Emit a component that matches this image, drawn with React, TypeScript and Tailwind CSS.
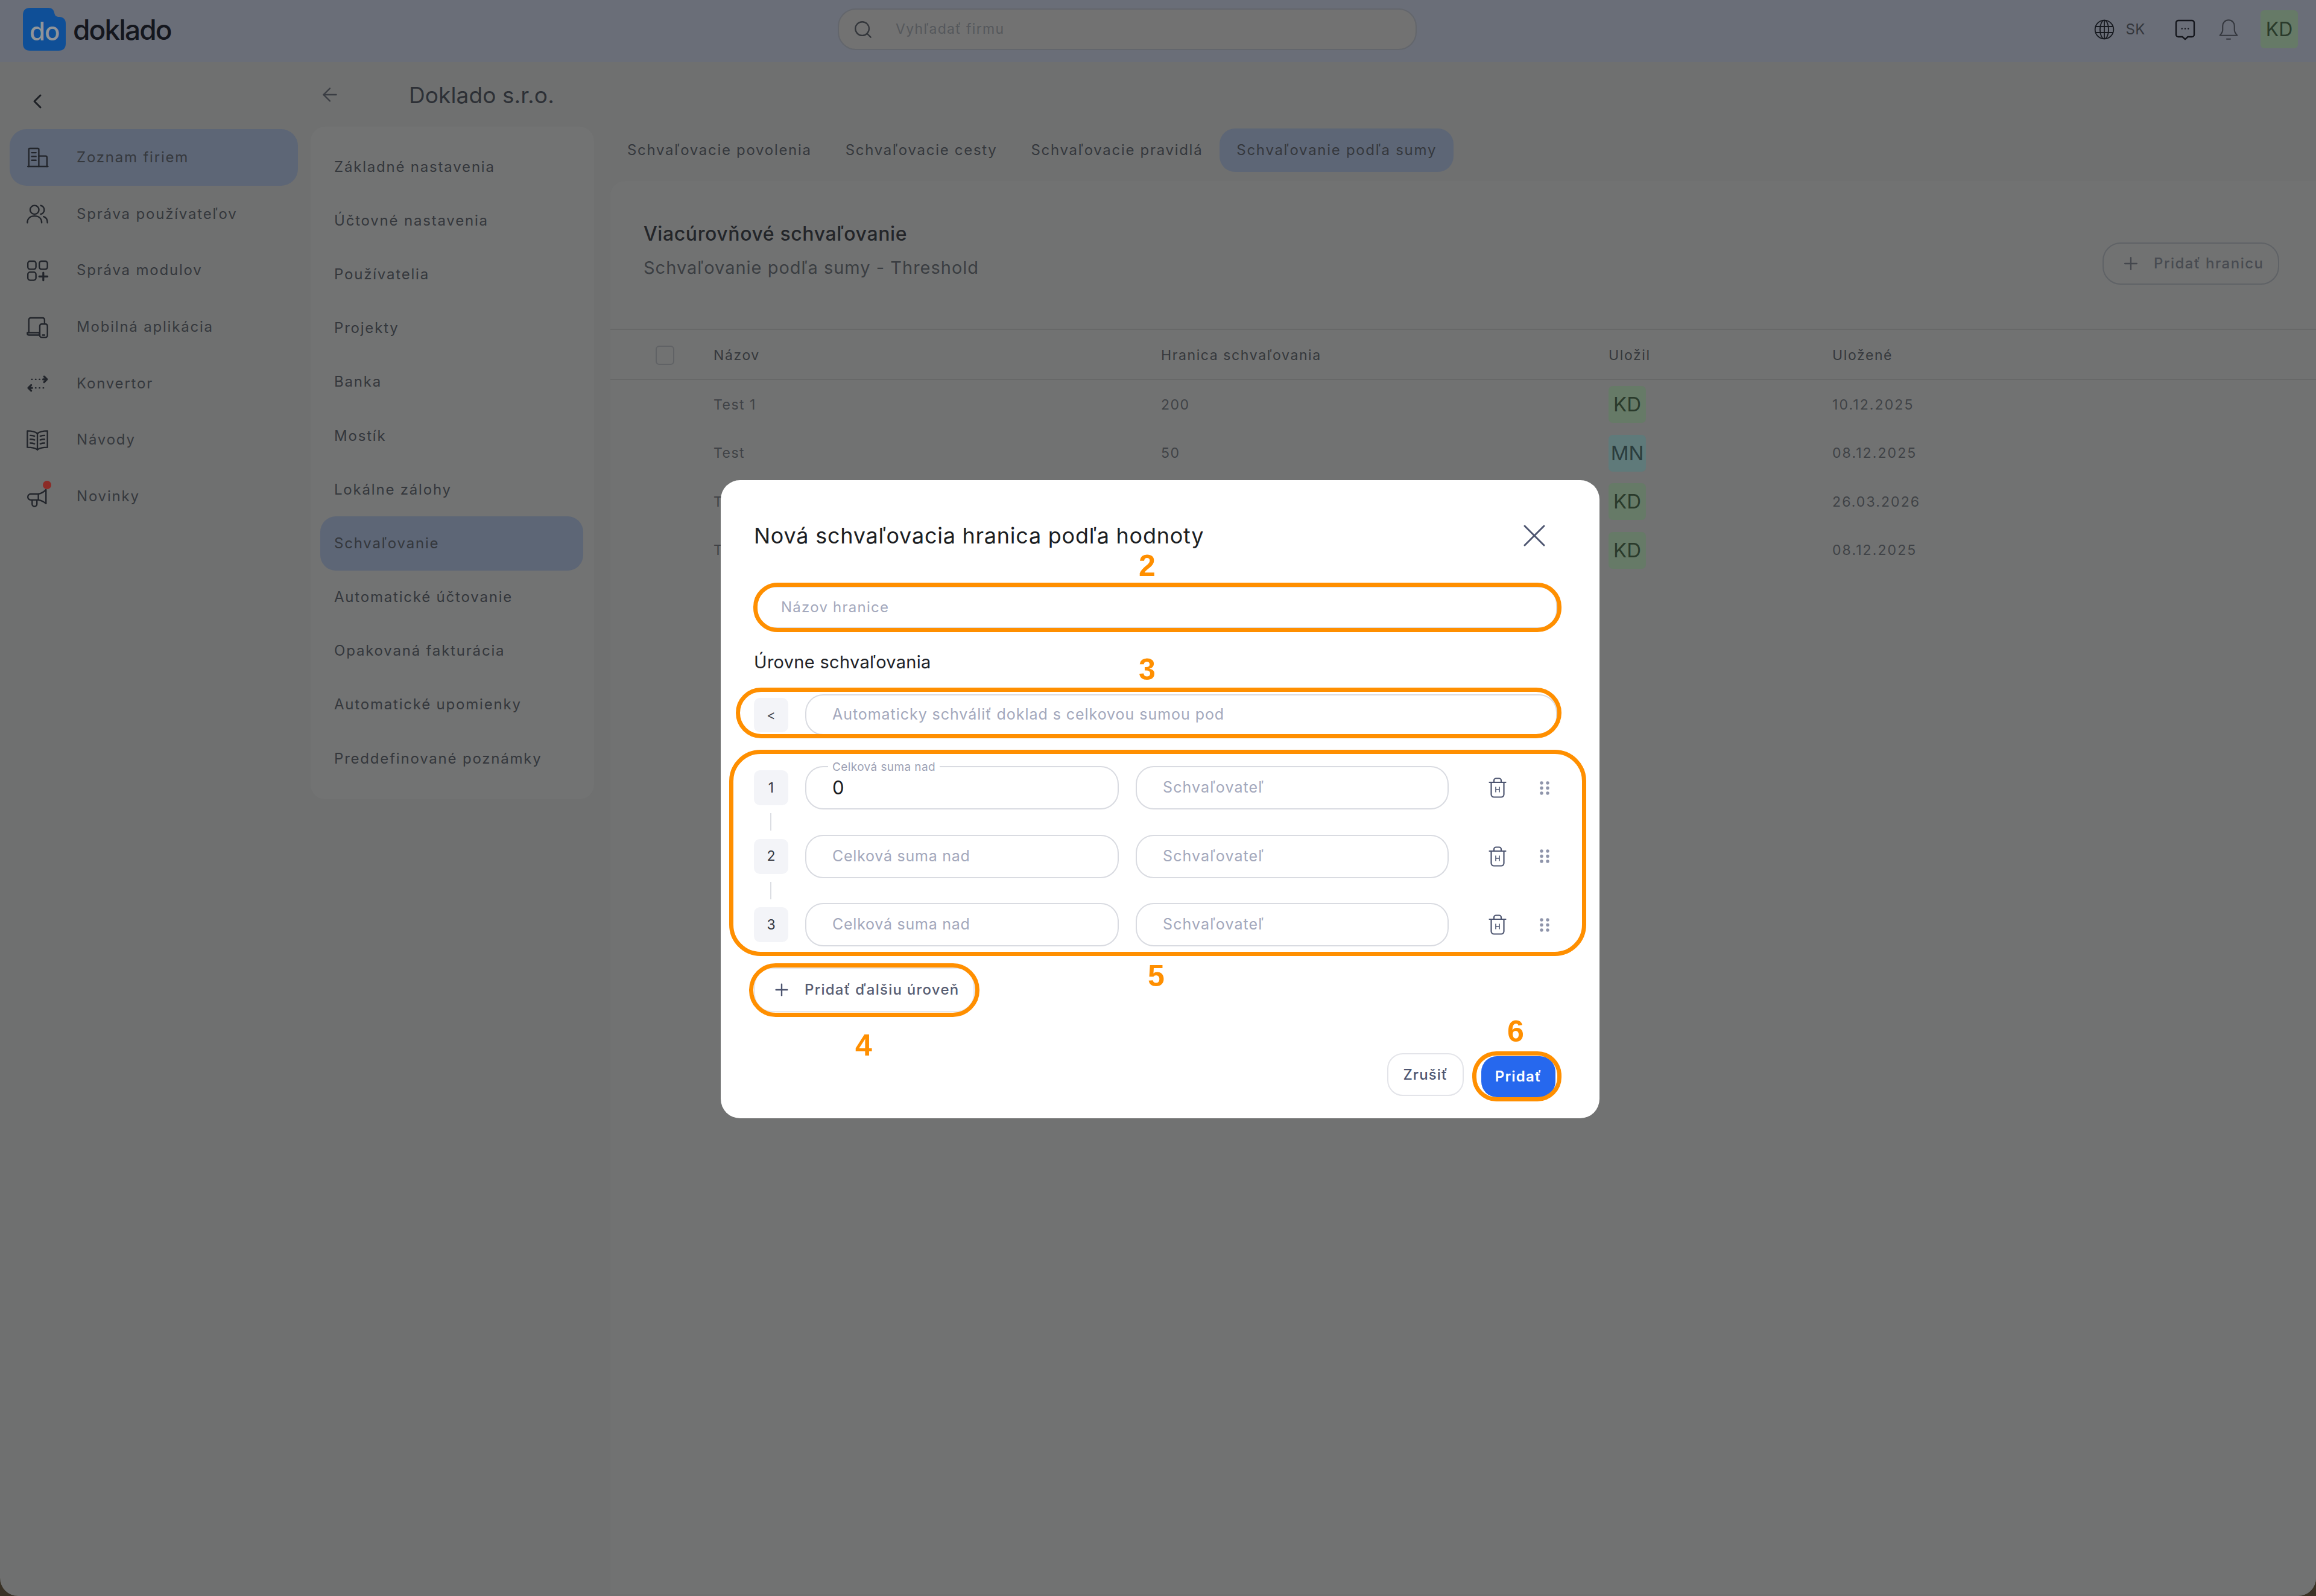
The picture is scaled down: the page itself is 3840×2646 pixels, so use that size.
import { ArrowLeft, ChevronLeft, Plus, Search, X } from 'lucide-react';

const FONT = "font-['Inter',sans-serif]";

const navItems = [
  { label: 'Zoznam firiem', icon: 'building', active: true },
  { label: 'Správa používateľov', icon: 'users' },
  { label: 'Správa modulov', icon: 'modules' },
  { label: 'Mobilná aplikácia', icon: 'devices' },
  { label: 'Konvertor', icon: 'convert' },
  { label: 'Návody', icon: 'book' },
  { label: 'Novinky', icon: 'megaphone' },
];

const settingsItems = [
  'Základné nastavenia',
  'Účtovné nastavenia',
  'Používatelia',
  'Projekty',
  'Banka',
  'Mostík',
  'Lokálne zálohy',
  'Schvaľovanie',
  'Automatické účtovanie',
  'Opakovaná fakturácia',
  'Automatické upomienky',
  'Preddefinované poznámky',
];

const tabs = ['Schvaľovacie povolenia', 'Schvaľovacie cesty', 'Schvaľovacie pravidlá', 'Schvaľovanie podľa sumy'];

const rows = [
  { name: 'Test 1', limit: '200', by: 'KD', date: '10.12.2025' },
  { name: 'Test', limit: '50', by: 'MN', date: '08.12.2025' },
  { name: 'T', limit: '', by: 'KD', date: '26.03.2026' },
  { name: 'T', limit: '', by: 'KD', date: '08.12.2025' },
];

function NavIcon({ name }: { name: string }) {
  const cls = 'w-[38px] h-[38px] text-[#22252b]';
  const common = { fill: 'none', stroke: 'currentColor', strokeWidth: 1.5, strokeLinecap: 'round' as const, strokeLinejoin: 'round' as const };
  if (name === 'building') {
    return (
      <svg viewBox="0 0 24 24" className={cls} {...common}>
        <path d="M2 21.5h21" />
        <path d="M3 21.5V3.5a1 1 0 0 1 1-1h8.5a1 1 0 0 1 1 1v18" />
        <path d="M13.5 10.5h7a1.5 1.5 0 0 1 1.5 1.5v9.5" />
        <path d="M6 7h4.5M6 11h4.5M6 15h4.5" />
      </svg>
    );
  }
  if (name === 'users') {
    return (
      <svg viewBox="0 0 24 24" className={cls} {...common}>
        <circle cx="9" cy="7.5" r="4.6" />
        <path d="M15.5 3a4.6 4.6 0 0 1 0 9" />
        <path d="M1.5 21c0-4.4 3-7 7.5-7s7.5 2.6 7.5 7" />
        <path d="M18.5 14.6c2.4.7 4 2.9 4 6.4" />
      </svg>
    );
  }
  if (name === 'modules') {
    return (
      <svg viewBox="0 0 24 24" className={cls} {...common}>
        <rect x="2" y="2.5" width="8.5" height="8.5" rx="2.4" />
        <rect x="14" y="2.5" width="8.5" height="8.5" rx="2.4" />
        <rect x="2" y="14" width="8.5" height="8.5" rx="2.4" />
        <path d="M18.2 14.5v8M14 18.5h8.5" strokeWidth={2} />
      </svg>
    );
  }
  if (name === 'devices') {
    return (
      <svg viewBox="0 0 24 24" className={cls} {...common}>
        <path d="M3 18V4.5a2 2 0 0 1 2-2h12.5a2 2 0 0 1 2 2v3" />
        <path d="M1.5 18H14v2.5H3a1.5 1.5 0 0 1-1.5-1.5z" />
        <rect x="14.5" y="9" width="8" height="14" rx="2" />
        <path d="M17.5 20.5h2" />
      </svg>
    );
  }
  if (name === 'convert') {
    return (
      <svg viewBox="0 0 24 24" className={cls} {...common}>
        <path d="M18 7.5h4M19 4.5l3 3-3 3" strokeWidth={1.9} />
        <path d="M6 7.5h.5M10 7.5h.5M14 7.5h.5" strokeWidth={1.4} />
        <path d="M2.5 16.5h4M5.5 13.5l-3 3 3 3" strokeWidth={1.9} />
        <path d="M10 16.5h.5M14 16.5h.5M18 16.5h.5" strokeWidth={1.4} />
      </svg>
    );
  }
  if (name === 'book') {
    return (
      <svg viewBox="0 0 24 24" className={cls} {...common}>
        <path d="M12 5.5C9.5 3.5 5.5 2.8 1.5 2.8V20c4 0 8 .5 10.5 2.5 2.5-2 6.5-2.5 10.5-2.5V2.8c-4 0-8 .7-10.5 2.7z" />
        <path d="M12 5.5v17" />
        <path d="M4.5 7.5c1.5 0 3 .2 4.5.8M4.5 11.5c1.5 0 3 .2 4.5.8M4.5 15.5c1.5 0 3 .2 4.5.8" />
        <path d="M19.5 7.5c-1.5 0-3 .2-4.5.8M19.5 11.5c-1.5 0-3 .2-4.5.8M19.5 15.5c-1.5 0-3 .2-4.5.8" />
      </svg>
    );
  }
  return (
    <span className="relative block w-[38px] h-[38px]">
      <svg viewBox="0 0 24 24" className={cls} {...common}>
        <path d="M21 5v14.5c-3-2.5-6-3.5-8-3.8V9.5c3-.5 5.5-2 8-4.5z" />
        <path d="M13 9.5H5a3 3 0 0 0-3 3.1 3 3 0 0 0 3 3.1h8" />
        <path d="M6.5 16v4a2.5 2.5 0 0 0 5 0v-4" />
      </svg>
      <span className="absolute right-[-4px] top-[-7px] w-[14px] h-[14px] rounded-full bg-[#8c2b27]" />
    </span>
  );
}

function TrashIcon() {
  return (
    <svg viewBox="0 0 30 34" className="w-[30px] h-[34px] text-[#4d5570]" fill="none" stroke="currentColor" strokeWidth="2.2" strokeLinecap="round" strokeLinejoin="round">
      <path d="M1.5 8h27" />
      <path d="M9 7.5V5a3.5 3.5 0 0 1 3.5-3.5h5A3.5 3.5 0 0 1 21 5v2.5" />
      <path d="M4.5 8v20a4.5 4.5 0 0 0 4.5 4.5h12a4.5 4.5 0 0 0 4.5-4.5V8" />
      <path d="M12 16v8M18 16v8M12 20h6" strokeWidth="1.6" />
    </svg>
  );
}

function GripIcon() {
  return (
    <svg viewBox="0 0 16 23" className="w-[16px] h-[23px] text-[#8f95ab]" fill="currentColor">
      <circle cx="3" cy="3" r="2.7" />
      <circle cx="13" cy="3" r="2.7" />
      <circle cx="3" cy="11.5" r="2.7" />
      <circle cx="13" cy="11.5" r="2.7" />
      <circle cx="3" cy="20" r="2.7" />
      <circle cx="13" cy="20" r="2.7" />
    </svg>
  );
}

function Header() {
  return (
    <header className="relative h-[103px] shrink-0 pb-[6px] bg-[#6a6e78] flex items-center">
      <div className="ml-[38px] flex items-center">
        <div className="relative w-[71px] h-[71px]">
          <svg viewBox="0 0 71 71" className="w-[71px] h-[71px]">
            <path d="M12 0h30c6 0 9 3 10 8 1 5 3 7 8 7 7 0 11 4 11 11v33c0 8-4 12-12 12H12C4 71 0 67 0 59V12C0 4 4 0 12 0z" fill="#0f4f97" />
          </svg>
          <span className="absolute left-[11px] top-[14px] text-[42px] leading-[50px] font-medium text-[#8f9499] tracking-[-1px]">do</span>
        </div>
        <span className="ml-[12px] text-[46px] leading-[56px] font-medium tracking-[-1.9px] text-[#14161d]">doklado</span>
      </div>
      <div className="absolute left-[1389px] top-[14px] w-[960px] h-[69px] rounded-[30px] border-2 border-[#63666c] bg-[#727272] flex items-center">
        <Search className="ml-[23px] w-[34px] h-[34px] text-[#33363b]" strokeWidth={1.6} />
        <span className="ml-[37px] text-[23px] text-[#55585c] tracking-[1.3px]">Vyhľadať firmu</span>
      </div>
      <div className="ml-auto mr-[30px] flex items-center">
        <svg viewBox="0 0 24 24" className="w-[34px] h-[34px] text-[#171a20]" fill="none" stroke="currentColor" strokeWidth="1.3">
          <circle cx="12" cy="12" r="10.8" />
          <ellipse cx="12" cy="12" rx="5" ry="10.8" />
          <path d="M1.5 8.5h21M1.5 15.5h21M12 1.2v21.6" />
        </svg>
        <span className="ml-[18px] text-[24px] text-[#33363c] tracking-[0.5px]">SK</span>
        <svg viewBox="0 0 24 24" className="ml-[48px] w-[36px] h-[36px] text-[#14161c]" fill="none" stroke="currentColor" strokeWidth="1.6" strokeLinejoin="round">
          <path d="M4.5 2h15A2.5 2.5 0 0 1 22 4.5v13a2.5 2.5 0 0 1-2.5 2.5h-4.5L12 22.8 9 20H4.5A2.5 2.5 0 0 1 2 17.5v-13A2.5 2.5 0 0 1 4.5 2z" />
          <path d="M8.5 11h.01M12 11h.01M15.5 11h.01" strokeLinecap="round" />
        </svg>
        <svg viewBox="0 0 24 24" className="ml-[36px] w-[36px] h-[38px] text-[#34373e]" fill="none" stroke="currentColor" strokeWidth="1.4" strokeLinecap="round" strokeLinejoin="round">
          <path d="M12 1.5c-4 0-6.5 3-6.5 6.5v4.5c0 2.5-1.5 4-3 6h19c-1.5-2-3-3.5-3-6V8c0-3.5-2.5-6.5-6.5-6.5z" />
          <path d="M10 22.5h4" />
        </svg>
        <span className="ml-[35px] w-[62px] h-[63px] rounded-[6px] bg-[#667a67] flex items-center justify-center text-[32px] text-[#2a3a2b]">KD</span>
      </div>
    </header>
  );
}

function Sidebar() {
  return (
    <aside className="w-[515px] shrink-0 pl-[16px]">
      <ChevronLeft className="ml-[26px] mt-[45px] w-[40px] h-[40px] text-[#1d2025]" strokeWidth={1.8} />
      <nav className="mt-[26px] w-[478px] flex flex-col">
        {navItems.map((item) => (
          <div
            key={item.label}
            className={`h-[93.7px] flex items-center pl-[27px] rounded-[28px] ${item.active ? 'bg-[#5d6676]' : ''}`}
          >
            <NavIcon name={item.icon} />
            <span className="ml-[46px] text-[24px] tracking-[1.8px] text-[#35383d]">{item.label}</span>
          </div>
        ))}
      </nav>
    </aside>
  );
}

function SettingsColumn() {
  return (
    <div className="w-[497px] shrink-0">
      <div className="h-[107px] flex items-center">
        <ArrowLeft className="ml-[14px] w-[36px] h-[36px] text-[#3a3d43]" strokeWidth={1.6} />
        <span className="ml-[113px] text-[37px] tracking-[0.1px] text-[#2d3036] mt-[2px]">Doklado s.r.o.</span>
      </div>
      <div className="w-[470px] h-[1115px] rounded-[24px] bg-[#727373] pl-[16px] pt-[22px]">
        {settingsItems.map((item) => (
          <div
            key={item}
            className={`w-[436px] h-[89.2px] flex items-center pl-[23px] rounded-[26px] text-[24px] tracking-[1.8px] text-[#34373c] ${item === 'Schvaľovanie' ? 'bg-[#5d6676]' : ''}`}
          >
            {item}
          </div>
        ))}
      </div>
    </div>
  );
}

function MainPanel() {
  return (
    <main className="flex-1 min-w-0">
      <div className="pt-[110px] flex items-center">
        {tabs.map((tab, i) => (
          <div
            key={tab}
            className={`h-[72px] flex items-center px-[28px] rounded-[26px] text-[24px] tracking-[1.7px] text-[#35383d] ${i === 3 ? 'bg-[#5d6676]' : ''}`}
          >
            {tab}
          </div>
        ))}
      </div>
      <section className="mt-[15px] h-[2343px] bg-[#717272] rounded-tl-[24px]">
        <div className="relative h-[247px] pl-[55px] pt-[66px] border-b-2 border-[#676868]">
          <h2 className="text-[32px] leading-[44px] font-medium tracking-[0.6px] text-[#232529]">Viacúrovňové schvaľovanie</h2>
          <p className="mt-[12px] text-[29px] leading-[44px] tracking-[1px] text-[#3b3e42]">Schvaľovanie podľa sumy - Threshold</p>
          <div className="absolute right-[61px] top-[102px] w-[293px] h-[70px] rounded-[30px] border-2 border-[#5f6266] flex items-center">
            <Plus className="ml-[28px] w-[34px] h-[34px] text-[#44474d]" strokeWidth={1.6} />
            <span className="ml-[21px] text-[24px] font-medium tracking-[1.5px] text-[#484b51]">Pridať hranicu</span>
          </div>
        </div>
        <div className="h-[83px] pt-[3px] flex items-center border-b-2 border-[#676868] text-[23px] tracking-[1.6px] text-[#35383c]">
          <span className="ml-[75px] w-[31px] h-[32px] rounded-[6px] border-2 border-[#606265]" />
          <span className="ml-[65px] w-[742px]">Názov</span>
          <span className="w-[742px]">Hranica schvaľovania</span>
          <span className="w-[371px]">Uložil</span>
          <span>Uložené</span>
        </div>
        {rows.map((row, i) => (
          <div key={i} className="h-[80.5px] pt-[1px] flex items-center text-[23px] tracking-[1.5px] text-[#3f4246] pl-[171px]">
            <span className="w-[742px]">{row.name}</span>
            <span className="w-[742px]">{row.limit}</span>
            <span className="w-[371px]">
              <span className={`w-[62px] h-[61px] rounded-[7px] flex items-center justify-center text-[33px] tracking-[0px] ${row.by === 'MN' ? 'bg-[#5f7a7a] text-[#2b3c3d]' : 'bg-[#667a67] text-[#2a3a2b]'}`}>
                {row.by}
              </span>
            </span>
            <span className="tracking-[2.1px]">{row.date}</span>
          </div>
        ))}
      </section>
    </main>
  );
}

function LevelRow({ n, filled, last }: { n: number; filled?: boolean; last?: boolean }) {
  return (
    <div className="relative h-[72px] flex items-center">
      <span className="w-[57px] h-[58px] rounded-[10px] bg-[#f3f4f8] flex items-center justify-center text-[23px] text-[#33363f]">{n}</span>
      {!last && <span className="absolute left-[27px] top-[78px] w-[2px] h-[29px] bg-[#dcdee3]" />}
      <div className="relative ml-[28px] w-[520px] h-[72px] rounded-[30px] border-2 border-[#d9dbe1] flex items-center pl-[43px]">
        {filled ? (
          <>
            <span className="absolute left-[36px] top-[-12px] bg-white px-[7px] text-[19px] leading-[24px] tracking-[0.4px] text-[#9da2b5]">Celková suma nad</span>
            <span className="text-[31px] text-[#1a1b1f]">0</span>
          </>
        ) : (
          <span className="text-[25px] tracking-[0.75px] text-[#a3a8bc]">Celková suma nad</span>
        )}
      </div>
      <div className="ml-[28px] w-[519px] h-[72px] rounded-[30px] border-2 border-[#d9dbe1] flex items-center pl-[43px]">
        <span className="text-[25px] tracking-[1.1px] text-[#a3a8bc]">Schvaľovateľ</span>
      </div>
      <span className="ml-[66px]"><TrashIcon /></span>
      <span className="ml-[55px]"><GripIcon /></span>
    </div>
  );
}

const markCls = 'absolute border-[7px] border-[#ff8f00]';
const numCls = "absolute w-[60px] text-center text-[50px] leading-[56px] font-bold text-[#ff8f00] font-['Liberation_Sans',sans-serif]";

function Modal() {
  return (
    <div className="absolute left-[1195px] top-[796px] w-[1457px] h-[1058px] rounded-[32px] bg-white pl-[55px]">
      <div className="pt-[66px] h-[118px] flex items-center pr-[76px] justify-between">
        <h2 className="text-[36px] tracking-[0.75px] text-[#1c1e23]">Nová schvaľovacia hranica podľa hodnoty</h2>
        <X className="w-[64px] h-[64px] text-[#4d5570]" strokeWidth={1.1} />
      </div>
      <div className="mt-[58px] w-[1332px] h-[70px] rounded-[30px] border-2 border-[#d9dbe1] flex items-center pl-[43px]">
        <span className="text-[24px] tracking-[1.25px] text-[#a3a8bc]">Názov hranice</span>
      </div>
      <div className="mt-[36px] h-[40px] flex items-center text-[29px] tracking-[0.3px] text-[#202228]">Úrovne schvaľovania</div>
      <div className="mt-[33px] h-[68px] flex items-center">
        <span className="w-[57px] h-[57px] rounded-[10px] bg-[#f3f4f8] flex items-center justify-center text-[22px] text-[#44474f]">&lt;</span>
        <div className="ml-[28px] w-[1247px] h-[68px] rounded-[30px] border-2 border-[#d9dbe1] flex items-center pl-[43px]">
          <span className="text-[25px] tracking-[0.95px] text-[#a3a8bc]">Automaticky schváliť doklad s celkovou sumou pod</span>
        </div>
      </div>
      <div className="mt-[51px] flex flex-col gap-[41.5px]">
        <LevelRow n={1} filled />
        <LevelRow n={2} />
        <LevelRow n={3} last />
      </div>
      <div className="mt-[35px] w-[366px] h-[74px] rounded-[30px] border-2 border-[#e6e7ec] flex items-center">
        <Plus className="ml-[28px] w-[32px] h-[32px] text-[#4d5570]" strokeWidth={1.8} />
        <span className="ml-[22px] text-[24px] font-medium tracking-[1.25px] text-[#565c72] whitespace-nowrap">Pridať ďalšiu úroveň</span>
      </div>
      <div className="mt-[68px] flex justify-end items-start pr-[73px]">
        <div className="w-[127px] h-[71px] rounded-[26px] border-2 border-[#e3e4e9] flex items-center justify-center text-[24px] font-medium tracking-[1.1px] text-[#4d5570]">Zrušiť</div>
        <div className="ml-[29px] mt-[5px] w-[123px] h-[68px] rounded-[26px] bg-[#2668ee] flex items-center justify-center text-[24px] font-semibold tracking-[1.2px] text-white">Pridať</div>
      </div>

      {/* annotation marks */}
      <span className={`${markCls} left-[54px] top-[170px] w-[1340px] h-[82px] rounded-[40px]`} />
      <span className={`${markCls} left-[25px] top-[344px] w-[1369px] h-[84px] rounded-[42px]`} />
      <span className={`${markCls} left-[14px] top-[447px] w-[1421px] h-[342px] rounded-[52px]`} />
      <span className={`${markCls} left-[47px] top-[801px] w-[382px] h-[89px] rounded-[44px]`} />
      <span className={`${markCls} left-[1246px] top-[947px] w-[148px] h-[83px] rounded-[40px]`} />
      <span className={`${numCls} left-[677px] top-[114px]`}>2</span>
      <span className={`${numCls} left-[677px] top-[286px]`}>3</span>
      <span className={`${numCls} left-[692px] top-[794px]`}>5</span>
      <span className={`${numCls} left-[207px] top-[909px]`}>4</span>
      <span className={`${numCls} left-[1288px] top-[886px]`}>6</span>
    </div>
  );
}

export default function App() {
  return (
    <div className={`relative w-[3840px] h-[2646px] overflow-hidden bg-[#3a3226] ${FONT}`}>
      <div className="w-full h-full flex flex-col bg-[#6f7070] rounded-bl-[30px] rounded-br-[30px] overflow-hidden">
        <Header />
        <div className="flex flex-1 min-h-0">
          <Sidebar />
          <SettingsColumn />
          <MainPanel />
        </div>
      </div>
      <Modal />
    </div>
  );
}
